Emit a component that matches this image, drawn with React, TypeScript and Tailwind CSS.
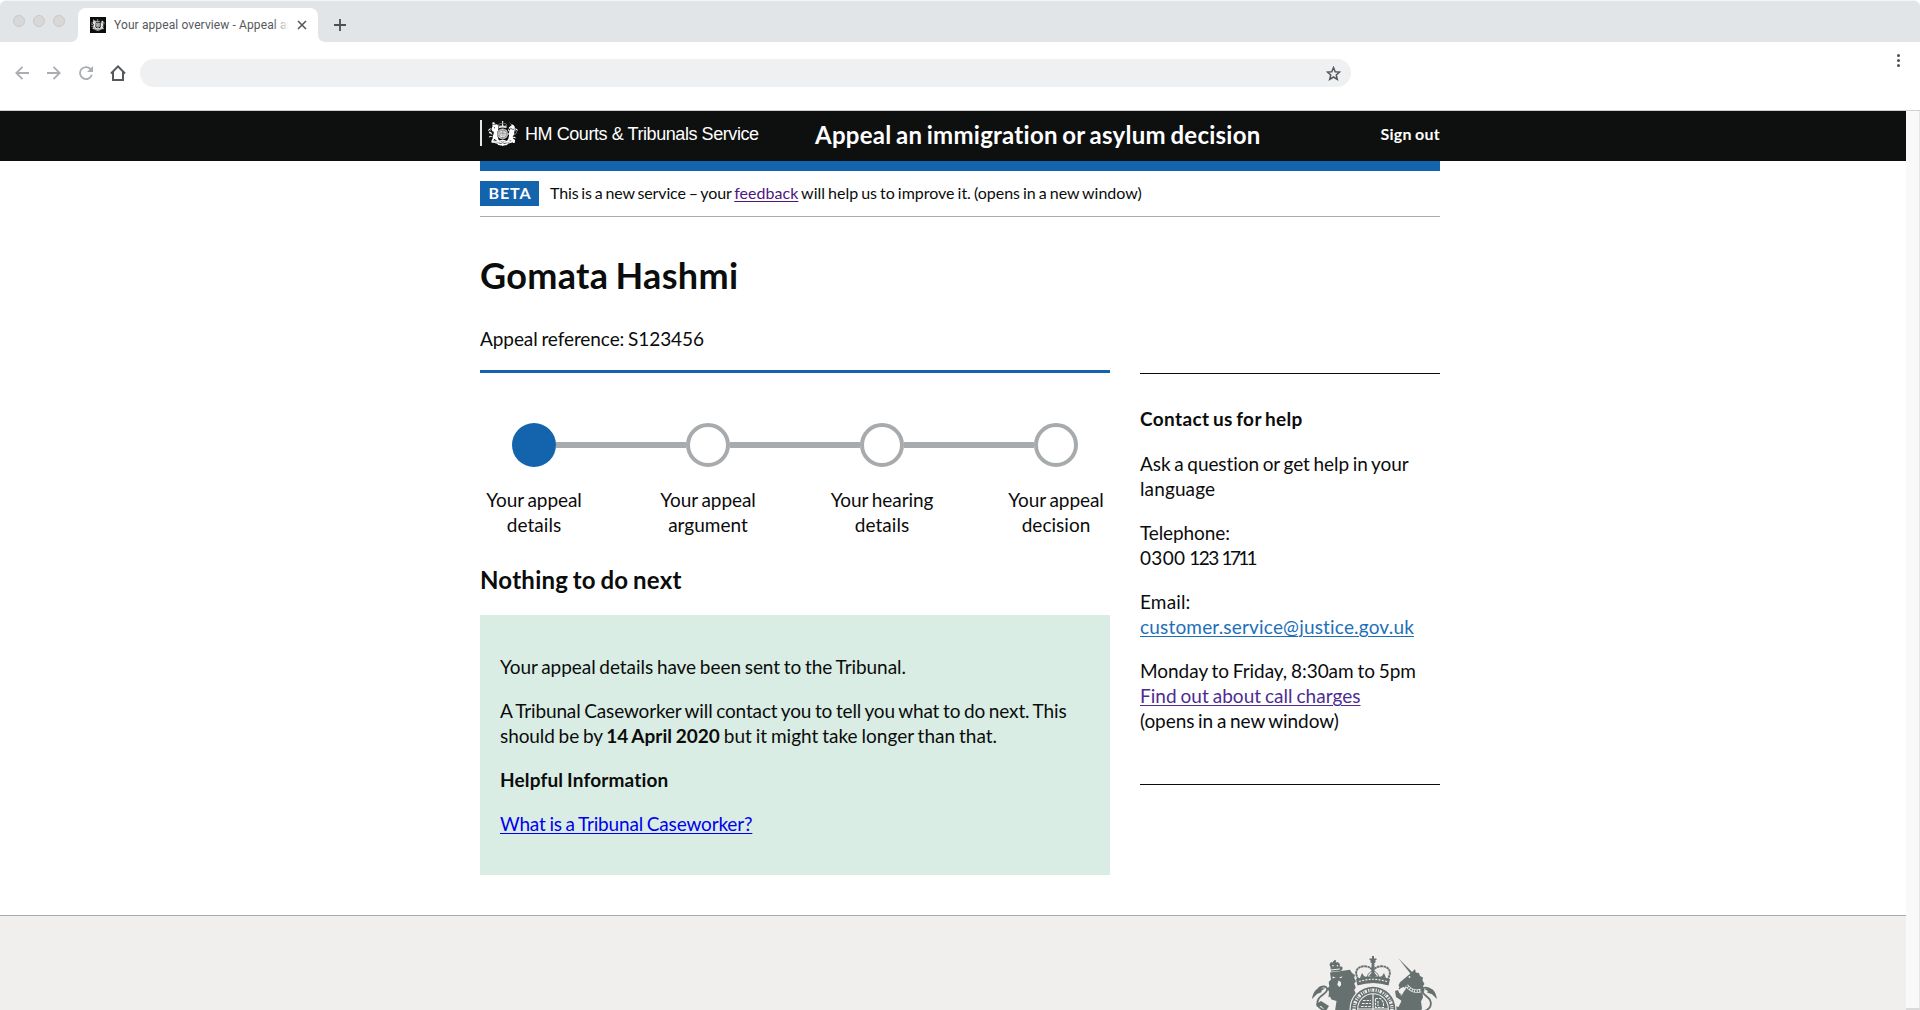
import React from 'react';

/** Royal coat of arms: lion and unicorn around a crowned garter shield. */
function CoatOfArms({ fg, bg, className }: { fg: string; bg: string; className?: string }) {
  return (
    <svg viewBox="0 0 125 104" className={className} aria-hidden="true">
      {/* crown */}
      <g fill={fg}>
        <circle cx="61" cy="5" r="2.6" />
        <path d="M60 0h2v10h-2zM57.5 2.5h7v1.6h-7z" />
        <circle cx="61" cy="8.8" r="1.6" />
        <path d="M44 23q17-6 34 0l-1.4 6.5q-15.600-5-31.200 0z" />
        <path d="M48 22l2-5 2 3 2 1.500zM74 22l-2-5-2 3-2 1.500zM57 20l4-5 4 5zM59.500 10h3v11h-3z" />
      </g>
      <g fill="none" stroke={fg} strokeWidth="1.9">
        <path d="M46.500 23.500C41 15 46 10 53 10.300c4 .2 6.500 2 8 4.200 1.500-2.200 4-4 8-4.200 7-.3 12 4.700 6.500 13.200" strokeDasharray="2.600 .5" />
        <path d="M61 14.500c-4 2-5.500 4-5.500 6.500M61 14.500c4 2 5.500 4 5.500 6.500" strokeWidth="1" />
      </g>
      <path d="M47 25.600q14-4.600 28 0" fill="none" stroke={bg} strokeWidth="1.100" strokeDasharray="2 1.300" />

      {/* lion */}
      <g fill={fg}>
        <path d="M18.500 11c-2-3 0-5.300 2.200-4.600.5-1.800 2.800-1.800 3.300 0 2.200-1 5 1 3.600 4.200l2 0c1.500 1 1.500 2-.3 4.200l-10.200 1z" />
        <circle cx="23" cy="5" r="1.100" />
        <path d="M18 16.500l9.500-1.300 5 -.8 5.500-.6 2 3.300 3 2-.8 2.700 1.800 3.600-1.800 2 1.600 4.200-1.600 2.500 1.800 4 .5 5-3.500 6 2 8-3 7 4 14 6 5-2 6h-9l-4-9-9-5-6 8 5 3-2 4h-8l-1-7 6-12-1-7 4-9 1.500-10-5-1.500-1.500-3-1.500.8.5-5.600-1.700-3.600 2-1.800-.6-4.500 2.300-2.300z" />
        <path d="M17 50l-8-5-5 3 1 3 4-1 5 5zM15 62l-9 1-3 4 3 2 3-2 8-1z" />
      </g>
      <g fill={bg}>
        <path d="M20.500 20.600l3.200.9-3 .9zM27 21.500l3.400-1.200-1.100 1.900zM26.500 24.500l2.400 1.400.2 3.400-1.800 1.600-2-2.200z" />
        <circle cx="21" cy="9.800" r=".8" />
        <circle cx="25.500" cy="9.800" r=".8" />
        <path d="M18.800 13.500l9-.9v.9l-9 .9z" />
      </g>
      <path d="M19 56C8 54 3 50 6.500 43c2-4 10-6 8.500-10.500-1-3-6-2.500-9 .5" fill="none" stroke={fg} strokeWidth="1.800" />
      <path d="M0 43c1-6 3-10 8-11l5 .5-4 2.500 1 1-5 2z" fill={fg} />

      {/* unicorn */}
      <g fill={fg}>
        <path d="M86.300 2.200l15 15-1.800 1.700z" />
        <path d="M99 17l4-4 .8 3.500 3.200.5 1 3 3 1.500-.5 3 2 3.500-1.500 2 1.500 5-2 1.500.5 5-2 4 1 7-4 8-4 6 3 7 8 6-2 12h-7l-1-6-11-6-7 8 2 4h-8l-1-6 7-13 3-14-11-6 .5-4 9 2.500 2.500-5 2-9 5-7.500-4.500 1.500-3.500 1.200-1.500-3 1.500-3z" />
        <path d="M93 47l-9-6-1-6 3-1 2 5 8 3zM100 66l10 0 6 4-2 3-7-3-8 1z" />
      </g>
      <circle cx="97.500" cy="21" r=".9" fill={bg} />
      <path d="M94.500 29.500q6 7.500 14.500 5" fill="none" stroke={bg} strokeWidth="3.400" />
      <path d="M94.500 29.500q6 7.500 14.500 5" fill="none" stroke={fg} strokeWidth="1.900" strokeDasharray="1.700 .9" />
      <path d="M96 36q-5 6-11 0M87 33q4-5 7-1" fill="none" stroke={fg} strokeWidth="1.400" strokeDasharray="2 .8" />
      <path d="M106 57c10-2 15-6 12-13-2-4-9-6-7.500-10.500 1-3 6-2 8 .5" fill="none" stroke={fg} strokeWidth="1.800" />
      <path d="M125 43c-1-6-3-10-8-11l-5 1 4 2-1 1.500 5 1.800z" fill={fg} />

      {/* garter and shield */}
      <circle cx="61" cy="53" r="23.500" fill={bg} />
      <circle cx="61" cy="53" r="22.300" fill={fg} />
      <circle cx="61" cy="53" r="18.900" fill="none" stroke={bg} strokeWidth="3.400" strokeDasharray="1.100 1.300 .8 .9 2.100 1.400" />
      <circle cx="61" cy="53" r="15.800" fill={bg} />
      <circle cx="61" cy="53" r="14.800" fill={fg} />
      <path d="M61 38v30M46 53h30" stroke={bg} strokeWidth="1.200" />
      <g fill="none" stroke={bg} strokeWidth="1.100" strokeDasharray="2.600 1">
        <path d="M51 44.500h8M50 47.500h9M49 50.500h10M63.500 42.500h5l3 4v5h-8zM66 45v5" />
        <path d="M50 56c3 0 5 3 8 3M51 60h7M64 57h9M64 60h8M64 63h6" />
      </g>

      {/* compartment and motto ribbon */}
      <g fill={fg}>
        <path d="M24 80q12 6 24 1l13-4 13 4q12 5 24-1l9 7-10 4q-14 6-26 2l-10-4-10 4q-12 4-26-2l-10-4z" />
        <path d="M38 92q10 5 18 2l5-2 5 2q8 3 18-2l-4 8-14 2-5 2-5-2-14-2z" />
      </g>
      <path d="M28 86q12 6 24 1l9-3 9 3q12 5 24-1" fill="none" stroke={bg} strokeWidth="2.400" strokeDasharray="1.500 1.500" />
    </svg>
  );
}

function BrowserChrome() {
  return (
    <div className="shrink-0 bg-white">
      <div className="flex h-[42px] items-end rounded-t-md border-t border-[#f3f5f7] bg-[#e1e5e8]">
        <div className="flex w-[78px] gap-2 self-start pl-[13px] pt-[14px]">
          <span className="size-3 rounded-full border border-[#c9c9c9] bg-[#d8d8d8]" />
          <span className="size-3 rounded-full border border-[#c9c9c9] bg-[#d8d8d8]" />
          <span className="size-3 rounded-full border border-[#c9c9c9] bg-[#d8d8d8]" />
        </div>
        <svg width="8" height="8" className="-ml-2"><path d="M8 0v8H0Q8 8 8 0z" fill="#fff" /></svg>
        <div className="flex h-[34px] w-[240px] items-center rounded-t-lg bg-white pl-3">
          <span className="flex size-4 items-center justify-center bg-[#0b0c0c]">
            <CoatOfArms fg="#e8e8e8" bg="#0b0c0c" className="w-[14px]" />
          </span>
          <span className="relative ml-2 w-[175px] overflow-hidden whitespace-nowrap font-['Roboto'] text-[12px] leading-4 tracking-[0.11px] text-[#55585c]">
            Your appeal overview - Appeal an
            <span className="absolute inset-y-0 right-0 w-4 bg-linear-to-r from-transparent to-white" />
          </span>
          <svg width="10" height="10" viewBox="0 0 10 10" className="ml-2" stroke="#55585c" strokeWidth="1.600">
            <path d="M1 1l8 8M9 1l-8 8" />
          </svg>
        </div>
        <svg width="8" height="8"><path d="M0 0v8h8Q0 8 0 0z" fill="#fff" /></svg>
        <svg width="12" height="12" viewBox="0 0 12 12" className="mb-[11px] ml-2" stroke="#4c4f53" strokeWidth="1.800">
          <path d="M6 0v12M0 6h12" />
        </svg>
      </div>
      <div className="flex h-[69px] items-center border-b border-[#cfd1d1] pb-[6px]">
        <svg width="14" height="14" viewBox="0 0 14 14" className="ml-[15px]" fill="none" stroke="#aaadb1" strokeWidth="1.800">
          <path d="M14 7H1.500M7.500 .8L1.300 7l6.200 6.200" />
        </svg>
        <svg width="14" height="14" viewBox="0 0 14 14" className="ml-[18px]" fill="none" stroke="#aaadb1" strokeWidth="1.800">
          <path d="M0 7h12.500M6.500 .8L12.700 7l-6.200 6.200" />
        </svg>
        <svg width="14" height="14" viewBox="0 0 14 14" className="ml-[18px]" fill="none">
          <path d="M11.600 3.100A6 6 0 1 0 12.800 8.800" stroke="#aaadb1" strokeWidth="1.800" />
          <path d="M14 0v6H8z" fill="#aaadb1" />
        </svg>
        <svg width="16" height="16" viewBox="0 0 16 16" className="ml-[17px]" fill="none" stroke="#55585c" strokeWidth="2">
          <path d="M1 8.500L8 1.400l7 7.100M3 7v8h10V7" />
        </svg>
        <div className="ml-[14px] flex h-7 w-[1211px] items-center justify-end rounded-full bg-[#eff0f2] pr-[10px]">
          <svg width="15" height="15" viewBox="0 0 24 24" fill="none" stroke="#55585c" strokeWidth="2.400">
            <path d="M12 2.500l2.700 6.600 7.100.6-5.400 4.700 1.700 7-6.100-3.800-6.100 3.800 1.700-7-5.400-4.700 7.100-.6z" />
          </svg>
        </div>
        <div className="-mt-[26px] ml-auto mr-5 flex flex-col gap-[2px]">
          <span className="size-[3px] rounded-full bg-[#4c4f53]" />
          <span className="size-[3px] rounded-full bg-[#4c4f53]" />
          <span className="size-[3px] rounded-full bg-[#4c4f53]" />
        </div>
      </div>
    </div>
  );
}

function Header() {
  return (
    <header className="h-[50px] bg-[#0e100f] text-white">
      <div className="ml-[480px] flex w-[960px] items-start">
        <span className="mt-[9px] h-[26px] w-[2px] bg-white/90" />
        <CoatOfArms fg="#fff" bg="#0e100f" className="ml-[6px] mt-[10px] h-[25px] w-[30px]" />
        <span className="ml-[7px] mt-[11px] w-[240px] whitespace-nowrap font-['Liberation_Sans'] text-[18px] leading-6 tracking-[-0.43px]">
          HM Courts &amp; Tribunals Service
        </span>
        <span className="ml-[50px] mt-[9px] whitespace-nowrap text-[24px] font-bold leading-[30px] tracking-[0.25px] [word-spacing:-1.5px]">
          Appeal an immigration or asylum decision
        </span>
        <span className="ml-auto mt-[13px] whitespace-nowrap text-[16px] font-bold leading-5 tracking-[0.3px] [word-spacing:-1.2px]">
          Sign out
        </span>
      </div>
    </header>
  );
}

const STEPS = [
  { top: 'Your appeal', bottom: 'details', done: true },
  { top: 'Your appeal', bottom: 'argument', done: false },
  { top: 'Your hearing', bottom: 'details', done: false },
  { top: 'Your appeal', bottom: 'decision', done: false },
];

function Progress() {
  return (
    <ol className="-ml-[33px] mt-[50px] flex">
      {STEPS.map((s, i) => (
        <li key={i} className="w-[174px] shrink-0 text-center">
          <div className="flex items-center">
            <span className={i === 0 ? 'h-[6px] flex-1' : 'h-[6px] flex-1 bg-[#a7abad]'} />
            <span className={s.done ? 'size-11 rounded-full bg-[#1464ad]' : 'size-11 rounded-full border-4 border-[#a7abad]'} />
            <span className={i === STEPS.length - 1 ? 'h-[6px] flex-1' : 'h-[6px] flex-1 bg-[#a7abad]'} />
          </div>
          <div className="mt-5 tracking-[-0.07px] [word-spacing:-1px]">{s.top}</div>
          <div className="tracking-[0.02px]">{s.bottom}</div>
        </li>
      ))}
    </ol>
  );
}

function Main() {
  return (
    <div className="w-[630px]">
      <div className="border-t-[3px] border-[#1464ad]" />
      <Progress />
      <h2 className="mt-[28px] text-[24px] font-bold leading-[30px] tracking-[0.25px] [word-spacing:-1.5px]">Nothing to do next</h2>
      <section className="mt-5 h-[260px] whitespace-nowrap bg-[#daede4] px-5 pt-[39px] [word-spacing:-1px]">
        <p className="tracking-[-0.06px]">Your appeal details have been sent to the Tribunal.</p>
        <p className="mt-[19px]">
          <span className="block tracking-[-0.14px]">
            A Tribunal Caseworker will contact you to tell you what to do next. This
          </span>
          <span className="block tracking-[0.01px]">
            <span className="tracking-[-0.08px]">should be by </span>
            <b className="tracking-[0.02px]">14 April 2020</b> but it might take longer than that.
          </span>
        </p>
        <h3 className="mt-[19px] font-bold tracking-[0.17px]">Helpful Information</h3>
        <p className="mt-[19px] tracking-[-0.16px]">
          <a className="text-[#0000ee] underline decoration-1 underline-offset-2">What is a Tribunal Caseworker?</a>
        </p>
      </section>
    </div>
  );
}

function Contact() {
  return (
    <aside className="mt-[3px] h-[412px] w-[300px] whitespace-nowrap border-y border-[#0b0c0c] pt-8 [word-spacing:-1px]">
      <h3 className="font-bold tracking-[0.37px] [word-spacing:-1.5px]">Contact us for help</h3>
      <p className="mt-5">
        <span className="block tracking-[-0.09px]">Ask a question or get help in your</span>
        <span className="block tracking-[0.12px]">language</span>
      </p>
      <p className="mt-[19px]">
        <span className="block tracking-[-0.1px]">Telephone:</span>
        <span className="block">
          <span className="tracking-[0.3px]">0300</span> <span className="tracking-[-1.5px]">123</span>{' '}
          <span className="tracking-[-2.7px]">1711</span>
        </span>
      </p>
      <p className="mt-[19px]">
        <span className="block tracking-[0.15px]">Email:</span>
        <a className="block tracking-[0.18px] text-[#1d70b8] underline decoration-1 underline-offset-2">customer.service@justice.gov.uk</a>
      </p>
      <p className="mt-[19px]">
        <span className="block tracking-[-0.04px]">Monday to Friday, 8:30am to 5pm</span>
        <a className="block tracking-[0.03px] text-[#4c2c92] underline decoration-1 underline-offset-2">Find out about call charges</a>
        <span className="block tracking-[-0.08px]">(opens in a new window)</span>
      </p>
    </aside>
  );
}

export default function App() {
  return (
    <div className="flex h-[1010px] w-[1920px] flex-col overflow-hidden bg-white font-['Lato',sans-serif] text-[19px] leading-[25px] text-[#0b0c0c] [font-variant-ligatures:none]">
      <BrowserChrome />
      <div className="flex min-h-0 flex-1">
        <div className="flex w-[1906px] shrink-0 flex-col overflow-hidden">
          <Header />
          <div className="ml-[480px] w-[960px]">
            <div className="h-[10px] bg-[#1464ad]" />
            <div className="flex h-[46px] items-start whitespace-nowrap border-b border-[#a9acae] pt-[10px] text-[16px]">
              <span className="flex h-[25px] w-[59px] items-center justify-center bg-[#1464ad] pb-[2px] pl-[1px] font-bold tracking-[0.9px] text-white">
                BETA
              </span>
              <span className="-mt-[1px] ml-[11px] tracking-[-0.15px] [word-spacing:-1px]">
                This is a new service – your{' '}
                <a className="tracking-[0.03px] text-[#4c1680] underline decoration-1 underline-offset-2">feedback</a>
                <span className="tracking-[-0.02px]"> will help us to improve it. (opens in a new window)</span>
              </span>
            </div>
            <h1 className="mt-[38px] text-[36px] font-bold leading-10 tracking-[0.33px] [word-spacing:-2px]">Gomata Hashmi</h1>
            <p className="mt-[31px] tracking-[-0.08px] [word-spacing:-1px]">Appeal reference: S123456</p>
            <div className="mt-[19px] flex items-start justify-between">
              <Main />
              <Contact />
            </div>
          </div>
          <footer className="mt-[40px] h-[95px] border-t border-[#a7abad] bg-[#f0efee]">
            <CoatOfArms fg="#66706f" bg="#f0efee" className="ml-[1312px] mt-[40px] w-[125px]" />
          </footer>
        </div>
        <div className="w-[14px] border-b-2 border-r border-b-[#dadada] border-r-[#e6e6e6] bg-[#f9f9f9]" />
      </div>
    </div>
  );
}
